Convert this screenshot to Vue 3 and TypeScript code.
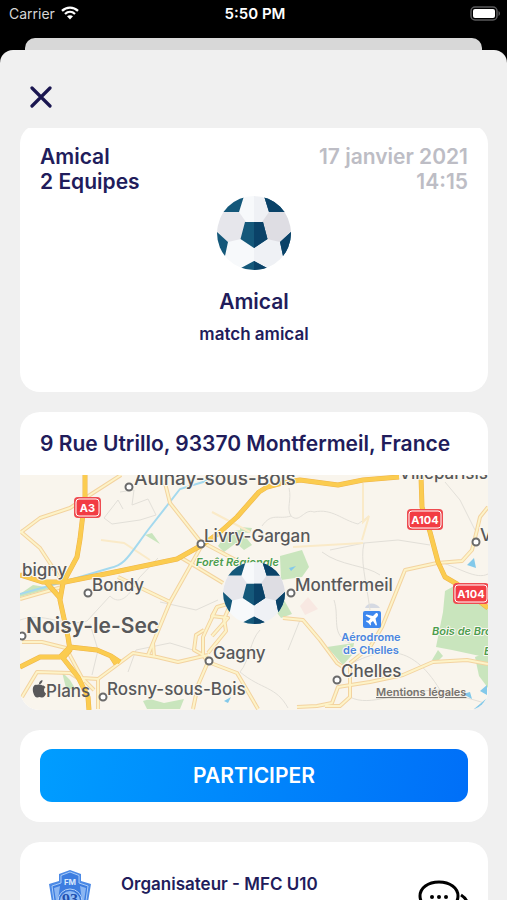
<script setup lang="ts">
interface Town {
  name: string
  x: number
  y: number
  dot?: [number, number]
  size?: 'medium' | 'large'
}

const match = {
  type: 'Amical',
  teams: '2 Equipes',
  date: '17 janvier 2021',
  time: '14:15',
  title: 'Amical',
  description: 'match amical',
  address: '9 Rue Utrillo, 93370 Montfermeil, France',
  organiser: 'Organisateur - MFC U10',
}

const woods: string[] = [
  'M280 556L302 550L309 567L302 577L281 580Z',
  'M272 606L284 600L292 614L281 618Z',
  'M445 591L456 585L488 606V652L480 656L452 650L436 647L443 612Z',
  'M475 657L488 652V688L479 676Z',
  'M432 660L438 650L443 656L438 661Z',
  'M327 647L354 643L352 655L343 665Z',
  'M143 701L150 699L164 703L184 699L170 709H147Z',
  'M145 535L152 533L160 544Z',
  'M20 594L33 585L52 588L20 597Z',
  'M62 672L70 680L76 690L66 688Z',
  'M218 546L228 532L240 530L252 545L244 550L236 543L224 552Z',
  'M240 527L252 528L250 533L240 532Z',
  'M170 706L184 699L180 709H170Z',
]

const lanes: string[] = [
  'M120 492L134 490L132 505L148 499L156 515L140 520L112 524',
  'M112 524L104 518L118 500L123 509',
  'M289 488C292 500 286 508 291 516C300 524 304 508 314 512C332 508 342 520 358 524L369 516',
  'M291 516C278 520 272 512 262 526',
  'M445 482L460 500L475 530',
  'M20 620C45 611 62 628 87 621L110 596C120 606 130 596 139 578L158 558',
  'M128 672L136 650L170 643L193 650',
  'M90 624L98 650L92 675M160 602L196 610L218 600',
  'M330 550L364 543L398 540L430 545M364 543C360 560 366 580 370 610',
  'M334 600C340 618 330 635 350 643M380 575C366 565 340 566 322 552',
  'M352 663C380 650 410 640 440 690L488 704M350 697C370 708 400 690 440 690',
  'M260 630C250 640 250 660 240 672C262 690 276 686 288 708',
  'M300 620L288 650M440 562C460 568 476 580 488 574',
]

const roads: string[] = [
  'M20 533L40 518L70 508L93 493L121 475',
  'M165 483L170 503L200 541L262 574',
  'M20 531L40 548L61 580',
  'M20 599L62 587',
  'M118 577L170 602',
  'M202 545L170 602L153 643L148 655M153 643L154 657',
  'M180 557L223 583',
  'M22 642L42 642L66 648L82 678L98 679L133 653L157 657L178 662L208 655',
  'M22 697L37 672L70 673L84 682M98 678V709M82 678L94 690',
  'M193 709L198 685L208 662L203 655V637L217 607L231 603L224 619L226 631L208 653',
  'M217 607L212 616L228 618L212 636M208 662L237 673L258 709',
  'M203 655L194 650L196 635L204 630',
  'M283 618L303 620L320 640L337 663L343 667',
  'M297 707L317 706L332 703L338 687L370 682L403 675L433 662L467 660L488 664',
  'M350 663V697L340 706H325M350 663L370 647L382 627L405 570L437 563L462 561L472 550L477 530L480 517L488 507',
]

const highways: string[] = [
  'M85 475V497L80 539L77 557L63 583L60 600L68 637L70 650L63 658L78 677L88 697L89 710',
  'M20 575L43 582H65L110 573L177 559L202 545L219 533L237 517L259 492L267 487L282 483L300 480L338 485L363 480L399 477',
  'M46 582L61 599',
  'M20 667L40 657L60 657L70 647L97 650L111 656L120 662M111 656L116 664',
  'M421 476L422 507L430 532L438 562L445 577L457 584L488 608',
]

const towns: Town[] = [
  { name: 'Aulnay-sous-Bois', x: 134, y: 485, dot: [129, 487], size: 'medium' },
  { name: 'Villeparisis', x: 399, y: 479 },
  { name: 'Livry-Gargan', x: 204, y: 542, dot: [201, 544] },
  { name: 'bigny', x: 22, y: 576 },
  { name: 'Bondy', x: 92, y: 591, dot: [88, 593] },
  { name: 'Montfermeil', x: 295, y: 591, dot: [291, 593] },
  { name: 'Noisy-le-Sec', x: 26, y: 633, dot: [22, 636], size: 'large' },
  { name: 'Gagny', x: 213, y: 659, dot: [209, 661] },
  { name: 'Chelles', x: 341, y: 677, dot: [337, 680] },
  { name: 'Rosny-sous-Bois', x: 107, y: 695, dot: [103, 697] },
  { name: 'V', x: 480, y: 541, dot: [476, 542] },
]

const shields = [
  { name: 'A3', x: 74, y: 497, w: 27 },
  { name: 'A104', x: 407, y: 509, w: 36 },
  { name: 'A104', x: 453, y: 583, w: 36 },
]
</script>

<template>
  <div class="screen">
    <svg class="defs" width="0" height="0" aria-hidden="true">
      <clipPath id="ball-clip"><circle cx="37" cy="37" r="37" /></clipPath>
      <symbol id="ball" viewBox="0 0 74 74">
        <g clip-path="url(#ball-clip)">
          <rect width="74" height="74" fill="#f7f9fb" />
          <path d="M5 16H22L29 26L24 43L11 46L-1 36Z" fill="#e6e6eb" />
          <path d="M69 16H52L45 26L50 43L63 46L75 36Z" fill="#e6e5e9" />
          <path
            d="M28 26H46L50.500 43L37 52L23.500 43ZM27 0L22 16H5V0ZM47 0L52 16H69V0ZM-1 35L11 46L8 60H-1ZM75 35L63 46L66 60H75ZM37 65L50 72V76H24V72Z"
            fill="#14587a"
          />
          <path d="M37 0H74V74H37Z" fill="#00083c" opacity="0.03" />
          <path
            d="M37 26H46L50.500 43L37 52ZM47 0L52 16H69V0ZM75 35L63 46L66 60H75ZM37 65L50 72V76H37Z"
            fill="#0a4268"
          />
        </g>
      </symbol>
    </svg>

    <header class="status">
      <div class="carrier">
        <span>Carrier</span>
        <svg width="18" height="14" viewBox="0 0 18 14" aria-hidden="true">
          <g fill="none" stroke="#fff" stroke-width="2.300">
            <path d="M1 4.800C5.500 0.500 12.500 0.500 17 4.800" />
            <path d="M4 8C7 5.200 11 5.200 14 8" />
          </g>
          <path d="M6 10.300C7.800 8.800 10.200 8.800 12 10.300L9 13.500Z" fill="#fff" />
        </svg>
      </div>
      <time class="clock">5:50 PM</time>
      <div class="battery">
        <svg width="31" height="15" viewBox="0 0 31 15" aria-hidden="true">
          <rect x="1" y="1" width="26" height="13" rx="4" fill="none" stroke="#59595b" stroke-width="1.500" />
          <rect x="3" y="3" width="22" height="9" rx="2" fill="#fff" />
          <path d="M28.500 5C30.500 6 30.500 9 28.500 10Z" fill="#59595b" />
        </svg>
      </div>
    </header>

    <div class="back-sheet"></div>

    <main class="sheet">
      <button class="close" type="button" aria-label="Fermer">
        <svg width="22" height="22" viewBox="0 0 22 22" aria-hidden="true">
          <path d="M2 2L20 20M20 2L2 20" stroke="#1a1650" stroke-width="3.200" stroke-linecap="round" />
        </svg>
      </button>

      <div class="content">
        <section class="card summary">
          <div class="summary-head">
            <div>{{ match.type }}<br />{{ match.teams }}</div>
            <div class="when">{{ match.date }}<br />{{ match.time }}</div>
          </div>
          <svg class="ball" aria-hidden="true"><use href="#ball" /></svg>
          <h1>{{ match.title }}</h1>
          <p>{{ match.description }}</p>
        </section>

        <section class="card place">
          <h2>{{ match.address }}</h2>
          <svg class="map" viewBox="20 475 468 235" role="img" aria-label="Plan">
            <rect x="20" y="475" width="468" height="235" fill="#f9f5ed" />
            <path v-for="d in woods" :key="d" :d="d" fill="#c9e5bd" />
            <path d="M300 606L308 597L318 609L305 615Z" fill="#f8e8e2" />
            <path d="M365 608C367 602 376 602 380 608Z" fill="#d5d9e2" />
            <path v-for="d in lanes" :key="d" :d="d" class="lane" />
            <path class="lane pale" d="M363 483V522L369 516L362 540M293 547L363 543M101 540L124 543L150 560M212 512L250 532" />
            <path class="canal" d="M20 594L63 582L110 568C125 565 128 557 148 530L180 489L203 482L215 475" />
            <path d="M467 565L474 558L476 568ZM289 568L296 566L291 571ZM224 701L231 697L228 703ZM463 694L470 692L472 699ZM480 691L487 685V695ZM474 709L487 698L480 709Z" fill="#83c9ea" />
            <path v-for="d in roads" :key="'c' + d" :d="d" class="road casing" />
            <path v-for="d in roads" :key="'f' + d" :d="d" class="road" />
            <path v-for="d in highways" :key="'c' + d" :d="d" class="highway casing" />
            <path v-for="d in highways" :key="'f' + d" :d="d" class="highway" />

            <g v-for="s in shields" :key="s.x">
              <rect :x="s.x" :y="s.y" :width="s.w" height="21" rx="4" fill="#ee4b50" />
              <rect :x="s.x + 2" :y="s.y + 2" :width="s.w - 4" height="17" rx="3" fill="#f23c43" stroke="#fff" />
              <text class="shield" :x="s.x + s.w / 2" :y="s.y + 15">{{ s.name }}</text>
            </g>

            <g v-for="t in towns" :key="t.name">
              <circle v-if="t.dot" :cx="t.dot[0]" :cy="t.dot[1]" r="3.500" class="dot" />
              <text class="town" :class="t.size" :x="t.x" :y="t.y">{{ t.name }}</text>
            </g>

            <g class="nature">
              <text x="196" y="566">Forêt Régionale</text>
              <text x="432" y="635">Bois de Brou</text>
              <text x="484" y="655">Et</text>
            </g>

            <rect x="363" y="611" width="18" height="17" rx="2" fill="#3d87ee" />
            <path
              d="M377.500 613.500C376.500 612.500 375.500 613.500 374.500 614.500L373 616L366.500 614.500L365.500 615.500L370.500 618.500L368.500 620.800L366.500 620.500L365.800 621.200L368.500 623L370.500 625.500L371 624.800L370.800 622.800L373 621L376 625.800L377 624.800L375.500 618.500L377 617C378 616 378.500 614.500 377.500 613.500Z"
              fill="#fff"
            />
            <g class="airport">
              <text x="371" y="641">Aérodrome</text>
              <text x="371" y="654">de Chelles</text>
            </g>

            <g fill="#58585a">
              <path d="M42.500 685.500C41 684.500 38.500 684.300 37 685C35 684 32.500 686 32.800 690C33 694 35.500 698 37.300 697.500C39 696.800 40 696.800 41.500 697.500C43.500 698 45.500 695.500 46 693.500C43.500 692 43.500 688.500 45.500 687.300C44.500 685.800 43.500 685.300 42.500 685.500Z" />
              <path d="M39 684.300C38.800 682 40.500 680.300 42.500 680C42.700 682.300 41 684.300 39 684.300Z" />
            </g>
            <text class="plans" x="46" y="697">Plans</text>
            <a href="#mentions"><text class="legal" x="376" y="696">Mentions légales</text></a>

            <use href="#ball" x="223" y="562" width="62" height="62" />
          </svg>
        </section>

        <section class="card action">
          <button class="join" type="button">PARTICIPER</button>
        </section>

        <section class="card organiser">
          <svg width="42" height="50" viewBox="0 0 42 50" aria-hidden="true">
            <path d="M21 0L32 4V11L42 14L39 32C36 42 28 47 21 50C14 47 6 42 3 32L0 14L10 11V4Z" fill="#4c8ae6" />
            <path d="M21 2L30 5.500V13L39 16L37 31C34 40 27 45 21 47C15 45 8 40 5 31L3 16L12 13V5.500Z" fill="#3d7de0" stroke="#a9cbf7" />
            <path d="M5 18L11 16L9 30L7 31ZM37 18L31 16L33 30L35 31Z" fill="#8bb6f2" />
            <circle cx="21" cy="31" r="12" fill="#3673d6" stroke="#b5d2f8" />
            <circle cx="21" cy="31" r="10" fill="#8fbaf5" />
            <text class="crest-top" x="21" y="15">FM</text>
            <text class="crest-number" x="21" y="35">93</text>
          </svg>
          <h3>{{ match.organiser }}</h3>
          <button class="chat" type="button" aria-label="Discussion">
            <svg width="52" height="42" viewBox="0 0 52 42" aria-hidden="true">
              <path
                d="M9 27C4 24 2 21 2 16C2 8 10 2 21 2C32 2 40 8 40 16C40 24 32 30 21 30C18 30 15 30 13 29L5 33Z"
                fill="none"
                stroke="#000"
                stroke-width="3"
              />
              <path d="M43 15C51 20 52 29 46 34L48 40L40 37C34 39 27 37 24 34" fill="none" stroke="#000" stroke-width="3" />
              <g><circle cx="14" cy="17" r="2" /><circle cx="21" cy="17" r="2" /><circle cx="28" cy="17" r="2" /></g>
            </svg>
          </button>
        </section>
      </div>
    </main>
  </div>
</template>

<style>
body {
  margin: 0;
  background: #000;
}
</style>

<style scoped>
.screen {
  display: flex;
  flex-direction: column;
  height: 100vh;
  overflow: hidden;
  background: #000;
  color: #211c5b;
  font-family: Inter, "Liberation Sans", sans-serif;
}
.defs {
  flex: none;
  position: absolute;
}
.status {
  flex: none;
  display: grid;
  grid-template-columns: 1fr auto 1fr;
  align-items: center;
  height: 26px;
  margin-bottom: 12px;
  padding: 0 6px 0 9px;
  color: #fff;
  font-size: 14px;
}
.carrier {
  display: flex;
  align-items: center;
  gap: 6px;
  color: #d6d6d6;
}
.clock {
  font-size: 15px;
  font-weight: 600;
}
.battery {
  display: flex;
  justify-content: flex-end;
}
.back-sheet {
  flex: none;
  height: 12px;
  margin: 0 25px;
  border-radius: 10px 10px 0 0;
  background: #d8d8d8;
}
.sheet {
  flex: 1;
  min-height: 0;
  display: flex;
  flex-direction: column;
  align-items: stretch;
  border-radius: 13px 13px 0 0;
  background: #f0f0f0;
}
button {
  border: 0;
  padding: 0;
  background: none;
  font: inherit;
  cursor: pointer;
}
.close {
  flex: none;
  align-self: flex-start;
  display: flex;
  padding: 36px 30px 20px;
}
.content {
  flex: 1;
  min-height: 0;
  overflow: hidden;
  display: flex;
  flex-direction: column;
  gap: 20px;
  padding: 0 19px 0 20px;
}
.card {
  flex: none;
  border-radius: 20px;
  background: #fff;
  overflow: hidden;
}
.summary {
  margin-top: -4px;
  height: 248px;
  padding: 20px 20px 0;
  display: flex;
  flex-direction: column;
  align-items: center;
}
.summary-head {
  align-self: stretch;
  display: flex;
  justify-content: space-between;
  font-size: 21px;
  line-height: 25px;
  font-weight: 600;
}
.when {
  color: #bdbdc5;
  text-align: right;
}
.ball {
  width: 74px;
  height: 74px;
  margin-top: 2px;
}
h1,
h2,
h3,
p {
  margin: 0;
  font-weight: 600;
}
h1 {
  margin-top: 18px;
  font-size: 21px;
  line-height: 28px;
}
p {
  margin-top: 6px;
  font-size: 17px;
  line-height: 24px;
}
h2 {
  padding: 18px 20px 17px;
  font-size: 21px;
  line-height: 28px;
  white-space: nowrap;
}
.map {
  display: block;
  width: 100%;
  height: auto;
}
.lane {
  fill: none;
  stroke: #e2dfd8;
  stroke-width: 1;
}
.pale {
  stroke: #faeac8;
  stroke-width: 2;
}
.canal {
  fill: none;
  stroke: #a4d9ee;
  stroke-width: 2;
}
.road {
  fill: none;
  stroke: #fdf3c8;
  stroke-width: 2;
  stroke-linejoin: round;
}
.road.casing {
  stroke: #f3d3a0;
  stroke-width: 4;
}
.highway {
  fill: none;
  stroke: #fbcc50;
  stroke-width: 4;
  stroke-linejoin: round;
}
.highway.casing {
  stroke: #efb54a;
  stroke-width: 5;
}
.dot {
  fill: #fff;
  stroke: #6a6a6a;
  stroke-width: 2;
}
.town,
.nature,
.airport {
  paint-order: stroke;
  stroke: #fbf8f1;
  stroke-width: 2px;
  stroke-linejoin: round;
}
.town {
  fill: #58585a;
  font-size: 17px;
  font-weight: 500;
}
.town.medium {
  font-size: 19px;
}
.town.large {
  font-size: 21px;
  font-weight: 600;
}
.nature {
  fill: #4b9d4d;
  font-size: 11px;
  font-style: italic;
  font-weight: 600;
}
.airport {
  fill: #4a86e0;
  font-size: 11px;
  font-weight: 600;
  text-anchor: middle;
}
.shield {
  fill: #fff;
  font-size: 11px;
  font-weight: 700;
  text-anchor: middle;
}
.plans {
  fill: #58585a;
  font-size: 17px;
  font-weight: 500;
}
.legal {
  fill: #77736e;
  font-size: 11px;
  font-weight: 600;
  text-decoration: underline;
}
.action {
  padding: 19px 20px 20px;
}
.join {
  display: block;
  width: 100%;
  height: 53px;
  border-radius: 12px;
  background: linear-gradient(100deg, #009dff, #006ff8);
  color: #fff;
  font-size: 21px;
  font-weight: 600;
}
.organiser {
  display: flex;
  align-items: flex-start;
  gap: 30px;
  height: 100px;
  padding: 28px 18px 0 29px;
}
h3 {
  flex: 1;
  padding-top: 3px;
  font-size: 17px;
  line-height: 22px;
}
.chat {
  display: flex;
  padding-top: 10px;
}
.crest-top,
.crest-number {
  font-weight: 700;
  text-anchor: middle;
}
.crest-top {
  fill: #d6e7fc;
  font-size: 8px;
}
.crest-number {
  fill: #1f4fae;
  font-family: "Liberation Serif", serif;
  font-size: 16px;
}
</style>
